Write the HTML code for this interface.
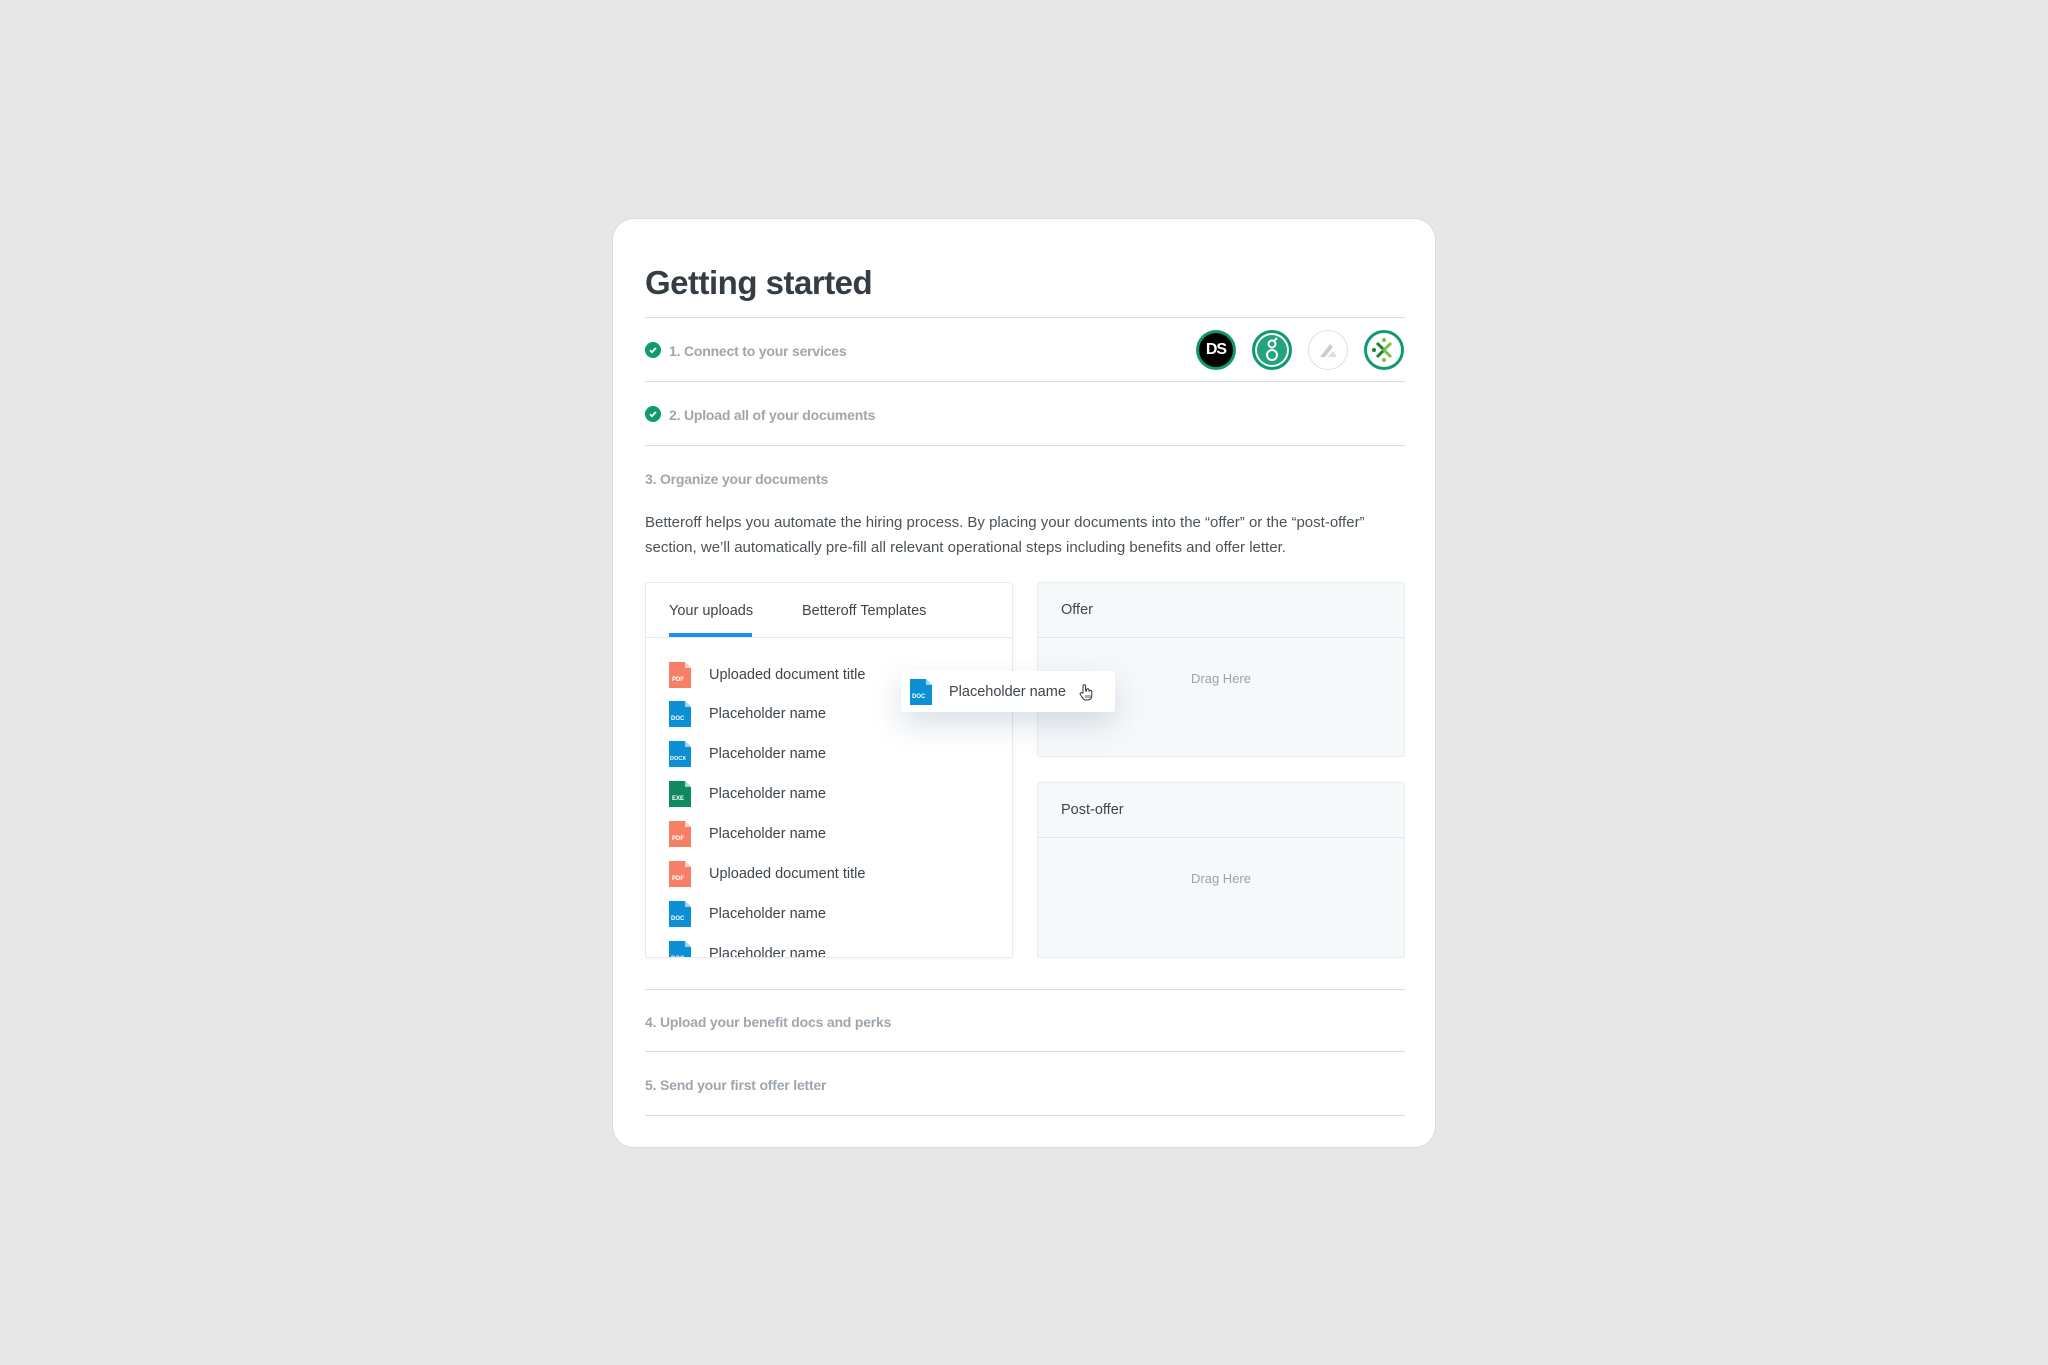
<!DOCTYPE html>
<html><head><meta charset="utf-8"><style>
*{margin:0;padding:0;box-sizing:border-box}
body{width:2048px;height:1365px;background:#e7e7e7;font-family:"Liberation Sans",sans-serif;position:relative;overflow:hidden}
.a{position:absolute}
.card{left:612px;top:218px;width:824px;height:930px;background:#fff;border:1px solid #dcdcdc;border-radius:22px}
.hr{position:absolute;left:645px;width:760px;height:1px;background:#d6dce2}
.step{position:absolute;left:669px;font-size:14px;font-weight:bold;color:#9ea6ae;transform:translateY(-50%);letter-spacing:-0.2px}
.chk{position:absolute;left:645px;width:16px;height:16px;border-radius:50%;background:#0f9a72;transform:translateY(-50%)}
.chk svg{position:absolute;left:3px;top:3px}
.p{left:645px;top:510px;font-size:15px;line-height:25px;color:#4a5359;width:760px}
.panel{left:645px;top:582px;width:368px;height:376px;border:1px solid #e6eaee;border-radius:3px;overflow:hidden;background:#fff;box-shadow:0 1px 2px rgba(0,0,0,.04)}
.tab{position:absolute;top:20px;font-size:14.5px;color:#3d464d}
.item{position:absolute;left:23px;height:26px}
.item span{position:absolute;left:40px;top:5px;font-size:14.5px;color:#3d464d;white-space:nowrap}
.drop{left:1037px;width:368px;background:#f6f9fa;border:1px solid #e6ecef;border-radius:3px}
.drop .h{position:absolute;left:0;right:0;top:0;height:55px;border-bottom:1px solid #e0e7ec}
.drop .t{position:absolute;left:23px;top:19px;font-size:14.5px;color:#3d464d}
.drop .d{position:absolute;left:0;right:0;text-align:center;font-size:13px;color:#9aa3ab}
.ic{position:absolute;width:40px;height:40px;border-radius:50%;top:330px}
</style></head><body>
<div class="a card"></div>
<div class="a" style="left:645px;top:264px;font-size:33px;font-weight:bold;color:#343d44;letter-spacing:-0.5px">Getting started</div>
<div class="hr" style="top:317px"></div>
<div class="chk" style="top:350px"><svg width="10" height="10" viewBox="0 0 10 10"><path d="M2 5.2l2 2 4-4.4" stroke="#fff" stroke-width="1.8" fill="none"/></svg></div>
<div class="step" style="top:351px">1. Connect to your services</div>
<div class="ic" style="left:1196px;background:#0f9a72;padding:3px"><div style="width:34px;height:34px;border-radius:50%;background:#000;color:#fff;font-weight:bold;font-size:16px;text-align:center;line-height:34px;letter-spacing:-1px">DS</div></div>
<div class="ic" style="left:1252px;background:#22a57d;border:3px solid #0f9a72;box-shadow:inset 0 0 0 2px #fff"><svg width="34" height="34" viewBox="0 0 34 34"><circle cx="17" cy="22" r="5" stroke="#fff" stroke-width="2" fill="none"/><circle cx="17" cy="11" r="3.5" stroke="#fff" stroke-width="2" fill="none"/><path d="M19 8l3-3" stroke="#fff" stroke-width="2"/></svg></div>
<div class="ic" style="left:1308px;border:1.5px solid #dde1e5;background:#fff"><svg width="37" height="37" viewBox="0 0 37 37"><path d="M11 26l10-13 3 3-8 10z" fill="#c9cdd1"/><path d="M19 26l5-6 4 6z" fill="#d9dcdf"/></svg></div>
<div class="ic" style="left:1364px;border:3px solid #0f9a72;background:#fff"><svg width="34" height="34" viewBox="0 0 34 34"><path d="M10 10l7 7-7 7" stroke="#1a7f3c" stroke-width="3" fill="none"/><path d="M24 10l-7 7 7 7" stroke="#7cc242" stroke-width="3" fill="none"/><circle cx="17" cy="7" r="2" fill="#7cc242"/><circle cx="17" cy="27" r="2" fill="#7cc242"/><circle cx="7" cy="17" r="2" fill="#1a7f3c"/></svg></div>
<div class="hr" style="top:381px"></div>
<div class="chk" style="top:414px"><svg width="10" height="10" viewBox="0 0 10 10"><path d="M2 5.2l2 2 4-4.4" stroke="#fff" stroke-width="1.8" fill="none"/></svg></div>
<div class="step" style="top:415px">2. Upload all of your documents</div>
<div class="hr" style="top:445px"></div>
<div class="step" style="top:479px;left:645px">3. Organize your documents</div>
<div class="a p">Betteroff helps you automate the hiring process. By placing your documents into the “offer” or the “post-offer” section, we’ll automatically pre-fill all relevant operational steps including benefits and offer letter.</div>

<div class="a panel">
<div class="tab" style="left:23px">Your uploads</div>
<div class="tab" style="left:156px">Betteroff Templates</div>
<div class="a" style="left:23px;top:50px;width:83px;height:4px;background:#1e8ef5"></div>
<div class="a" style="left:0;right:0;top:54px;height:1px;background:#e6eaee"></div>
<div class="item" style="top:79px"><svg width="22" height="26"><path d="M0 0h16l6 6v20H0z" fill="#f77f66"/><path d="M16 0v6h6" fill="#fbd0c6"/><text x="3" y="19" font-size="6" fill="#fff" font-family="Liberation Sans" font-weight="bold">PDF</text></svg><span>Uploaded document title</span></div>
<div class="item" style="top:118px"><svg width="22" height="26"><path d="M0 0h16l6 6v20H0z" fill="#0d8fd6"/><path d="M16 0v6h6" fill="#9fd3f1"/><text x="2" y="19" font-size="6" fill="#fff" font-family="Liberation Sans" font-weight="bold">DOC</text></svg><span>Placeholder name</span></div>
<div class="item" style="top:158px"><svg width="22" height="26"><path d="M0 0h16l6 6v20H0z" fill="#0d8fd6"/><path d="M16 0v6h6" fill="#9fd3f1"/><text x="1" y="19" font-size="5.5" fill="#fff" font-family="Liberation Sans" font-weight="bold">DOCX</text></svg><span>Placeholder name</span></div>
<div class="item" style="top:198px"><svg width="22" height="26"><path d="M0 0h16l6 6v20H0z" fill="#0f8a5f"/><path d="M16 0v6h6" fill="#9fdcc4"/><text x="3" y="19" font-size="6" fill="#fff" font-family="Liberation Sans" font-weight="bold">EXE</text></svg><span>Placeholder name</span></div>
<div class="item" style="top:238px"><svg width="22" height="26"><path d="M0 0h16l6 6v20H0z" fill="#f77f66"/><path d="M16 0v6h6" fill="#fbd0c6"/><text x="3" y="19" font-size="6" fill="#fff" font-family="Liberation Sans" font-weight="bold">PDF</text></svg><span>Placeholder name</span></div>
<div class="item" style="top:278px"><svg width="22" height="26"><path d="M0 0h16l6 6v20H0z" fill="#f77f66"/><path d="M16 0v6h6" fill="#fbd0c6"/><text x="3" y="19" font-size="6" fill="#fff" font-family="Liberation Sans" font-weight="bold">PDF</text></svg><span>Uploaded document title</span></div>
<div class="item" style="top:318px"><svg width="22" height="26"><path d="M0 0h16l6 6v20H0z" fill="#0d8fd6"/><path d="M16 0v6h6" fill="#9fd3f1"/><text x="2" y="19" font-size="6" fill="#fff" font-family="Liberation Sans" font-weight="bold">DOC</text></svg><span>Placeholder name</span></div>
<div class="item" style="top:358px"><svg width="22" height="26"><path d="M0 0h16l6 6v20H0z" fill="#0d8fd6"/><path d="M16 0v6h6" fill="#9fd3f1"/><text x="2" y="19" font-size="6" fill="#fff" font-family="Liberation Sans" font-weight="bold">DOC</text></svg><span>Placeholder name</span></div>
</div>

<div class="a drop" style="top:582px;height:175px"><div class="h"></div><div class="t">Offer</div><div class="d" style="top:88px">Drag Here</div></div>
<div class="a drop" style="top:782px;height:176px"><div class="h"></div><div class="t">Post-offer</div><div class="d" style="top:88px">Drag Here</div></div>

<div class="a" style="left:901px;top:671px;width:214px;height:41px;background:#fff;border-radius:3px;box-shadow:0 12px 30px rgba(80,110,150,.22)">
<svg class="a" style="left:9px;top:8px" width="22" height="26"><path d="M0 0h16l6 6v20H0z" fill="#0d8fd6"/><path d="M16 0v6h6" fill="#9fd3f1"/><text x="2" y="19" font-size="6" fill="#fff" font-family="Liberation Sans" font-weight="bold">DOC</text></svg>
<span class="a" style="left:48px;top:13px;font-size:14.5px;color:#3d464d">Placeholder name</span>
<svg class="a" style="left:177px;top:12px" width="16" height="18" viewBox="0 0 16 18"><path d="M5 10V3a1.3 1.3 0 0 1 2.6 0v5h1V7a1.2 1.2 0 0 1 2.4 0v1h.5a1.2 1.2 0 0 1 2.3.5V13c0 2.5-2 4-4.5 4H8c-2 0-3-1-4-3l-2-3a1.2 1.2 0 0 1 2-1z" fill="#fff" stroke="#333" stroke-width="1"/><path d="M8 12v3M10 12v3M12 12v3" stroke="#333" stroke-width=".8"/></svg>
</div>

<div class="hr" style="top:989px"></div>
<div class="step" style="top:1022px;left:645px">4. Upload your benefit docs and perks</div>
<div class="hr" style="top:1051px"></div>
<div class="step" style="top:1085px;left:645px">5. Send your first offer letter</div>
<div class="hr" style="top:1115px"></div>
</body></html>
